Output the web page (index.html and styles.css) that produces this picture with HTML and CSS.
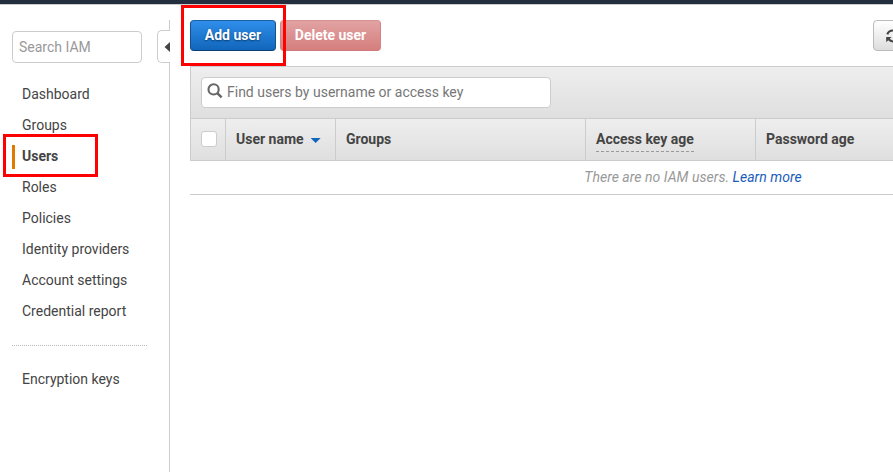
FILE: index.html
```html
<!DOCTYPE html>
<html lang="en">
<head>
<meta charset="utf-8">
<title>IAM Users</title>
<link rel="stylesheet" href="styles.css">
</head>
<body>
<header class="topbar"></header>
<div class="layout">
  <aside class="sidebar">
    <input class="search" type="text" placeholder="Search IAM">
    <nav class="nav">
      <a>Dashboard</a>
      <a>Groups</a>
      <a class="active">Users<span class="mark mark-users"></span></a>
      <a>Roles</a>
      <a>Policies</a>
      <a>Identity providers</a>
      <a>Account settings</a>
      <a>Credential report</a>
    </nav>
    <hr class="divider">
    <nav class="nav">
      <a>Encryption keys</a>
    </nav>
  </aside>
  <div class="rail">
    <div class="rail-top"></div>
    <div class="collapse"><svg width="6" height="10" viewBox="0 0 6 10"><path d="M6 0v10L0.5 5z" fill="#444"/></svg></div>
    <div class="rail-line"></div>
  </div>
  <main class="content">
    <div class="actions">
      <button class="btn primary">Add user<span class="mark mark-add"></span></button>
      <button class="btn danger">Delete user</button>
      <button class="btn refresh" aria-label="Refresh"><svg width="15" height="14" viewBox="0 0 15 14"><g fill="none" stroke="#444" stroke-width="2.2"><path d="M1.3 5.4C2.1 2.9 4.4 1.5 7.3 1.5c2 0 3.6.8 4.8 2.2"/><path d="M13.3 8.4c-.8 2.6-3.1 4.1-5.8 4.1-2 0-3.6-.8-4.8-2.2"/></g><path d="M14.3 1v5H9.2zM.2 13.2V8h5.3z" fill="#444"/></svg></button>
    </div>
    <section class="panel">
      <div class="filter">
        <div class="find">
          <svg width="16" height="16" viewBox="0 0 16 16"><circle cx="6.6" cy="6.4" r="5.1" fill="none" stroke="#666" stroke-width="2.1"/><path d="M10.3 10.1l4.3 4.2" stroke="#666" stroke-width="2.5"/></svg>
          <span>Find users by username or access key</span>
        </div>
      </div>
      <div class="row head">
        <div class="cell check"><span class="box"></span></div>
        <div class="cell name">User name<i class="sort"></i></div>
        <div class="cell">Groups</div>
        <div class="cell"><span class="hint">Access key age</span></div>
        <div class="cell">Password age</div>
      </div>
      <div class="empty">There are no IAM users. <a>Learn more</a></div>
    </section>
  </main>
</div>
</body>
</html>
```

FILE: styles.css
```css
* { box-sizing: border-box; }
body {
  margin: 0;
  height: 472px;
  overflow: hidden;
  background: #fff;
  color: #444;
  font: 14px/20px Roboto, "Liberation Sans", sans-serif;
}
.topbar { height: 5px; background: #232f3e; border-bottom: 1px solid #ccc; }
.layout { display: flex; height: 467px; overflow: hidden; }
.sidebar { width: 157px; flex: none; padding: 26px 10px 0 12px; }
.search {
  display: block;
  width: 130px;
  height: 32px;
  padding: 0 6px;
  border: 1px solid #ccc;
  border-radius: 4px;
  font: inherit;
}
.search::placeholder { color: #999; opacity: 1; }
.nav { display: flex; flex-direction: column; }
.search + .nav { padding-top: 19px; }
.nav a { position: relative; height: 24px; margin-bottom: 7px; padding-left: 10px; line-height: 24px; }
.nav .active { font-weight: 700; }
.active::before { content: ""; position: absolute; left: 0; top: 1px; width: 3px; height: 24px; background: #e07b00; }
.divider { margin: 15px 0 21px; border: 0; border-top: 1px dotted #bbb; }

/* Callouts drawn over the page */
.mark { position: absolute; border: 3px solid #f00; pointer-events: none; z-index: 2; }
.mark-users { left: -9px; top: -10px; width: 95px; height: 43px; }
.mark-add { left: -10px; top: -16px; width: 105px; height: 61px; }

.rail { width: 13px; flex: none; display: flex; flex-direction: column; padding-top: 15px; }
.rail-top { height: 10px; border-right: 1px solid #ccc; }
.collapse {
  height: 33px;
  border: 1px solid #ccc;
  border-right: 0;
  border-radius: 5px 0 0 5px;
  display: flex;
  align-items: center;
  justify-content: flex-end;
}
.rail-line { flex: 1; border-right: 1px solid #ccc; }

.content { flex: none; width: 1006px; margin-left: 20px; padding-top: 15px; }
.actions { display: flex; gap: 4px; height: 46px; width: 723px; }
.btn {
  position: relative;
  height: 31px;
  padding: 0;
  border: 1px solid;
  border-radius: 4px;
  color: #fff;
  font: 700 14px/29px Roboto, "Liberation Sans", sans-serif;
}
.primary { width: 86px; background: linear-gradient(#2f8eea, #1166bb); border-color: #1b5fa5 #15508b #0c4075; text-shadow: 0 1px 2px #073c70; }
.danger { width: 101px; background: linear-gradient(#e2a2a2, #d67e7e); border-color: #d99292 #d28484 #cc7a7a; }
.refresh { width: 40px; margin-left: auto; background: linear-gradient(#fff, #ddd); border-color: #bbb; display: flex; align-items: center; justify-content: center; }

.panel { border-top: 1px solid #ccc; }
.filter { height: 51px; padding: 10px 10px 0; background: linear-gradient(#eee, #dfdfdf); border-left: 1px solid #ccc; }
.find {
  display: flex;
  align-items: center;
  width: 350px;
  height: 31px;
  padding: 0 0 1px 5px;
  gap: 4px;
  background: #fff;
  border: 1px solid #ccc;
  border-radius: 4px;
  color: #777;
}
.find svg { margin-top: -2px; }
.row { display: grid; grid-template-columns: 36px 110px 250px 170px 1fr; }
.head { height: 43px; border: 1px solid #ccc; border-right: 0; border-left: 0; background: linear-gradient(#eee, #dfdfdf); font-weight: 700; }
.cell { padding: 10px 10px 0; border-right: 1px solid #ccc; }
.check { border-left: 1px solid #ccc; }
.box { display: block; width: 16px; height: 16px; margin-top: 2px; background: #fff; border: 1px solid #ccc; border-radius: 3px; }
.name { display: flex; }
.sort { width: 10px; height: 5px; margin: 9px 0 0 7px; background: #1166bb; clip-path: polygon(0 0, 100% 0, 50% 100%); }
.hint { display: inline-block; height: 23px; border-bottom: 1px dashed #999; }
.empty { height: 34px; padding-top: 6px; border-bottom: 1px solid #ccc; text-align: center; font-style: italic; letter-spacing: 0.04px; color: #999; }
.empty a { color: #1a5dba; }
```
